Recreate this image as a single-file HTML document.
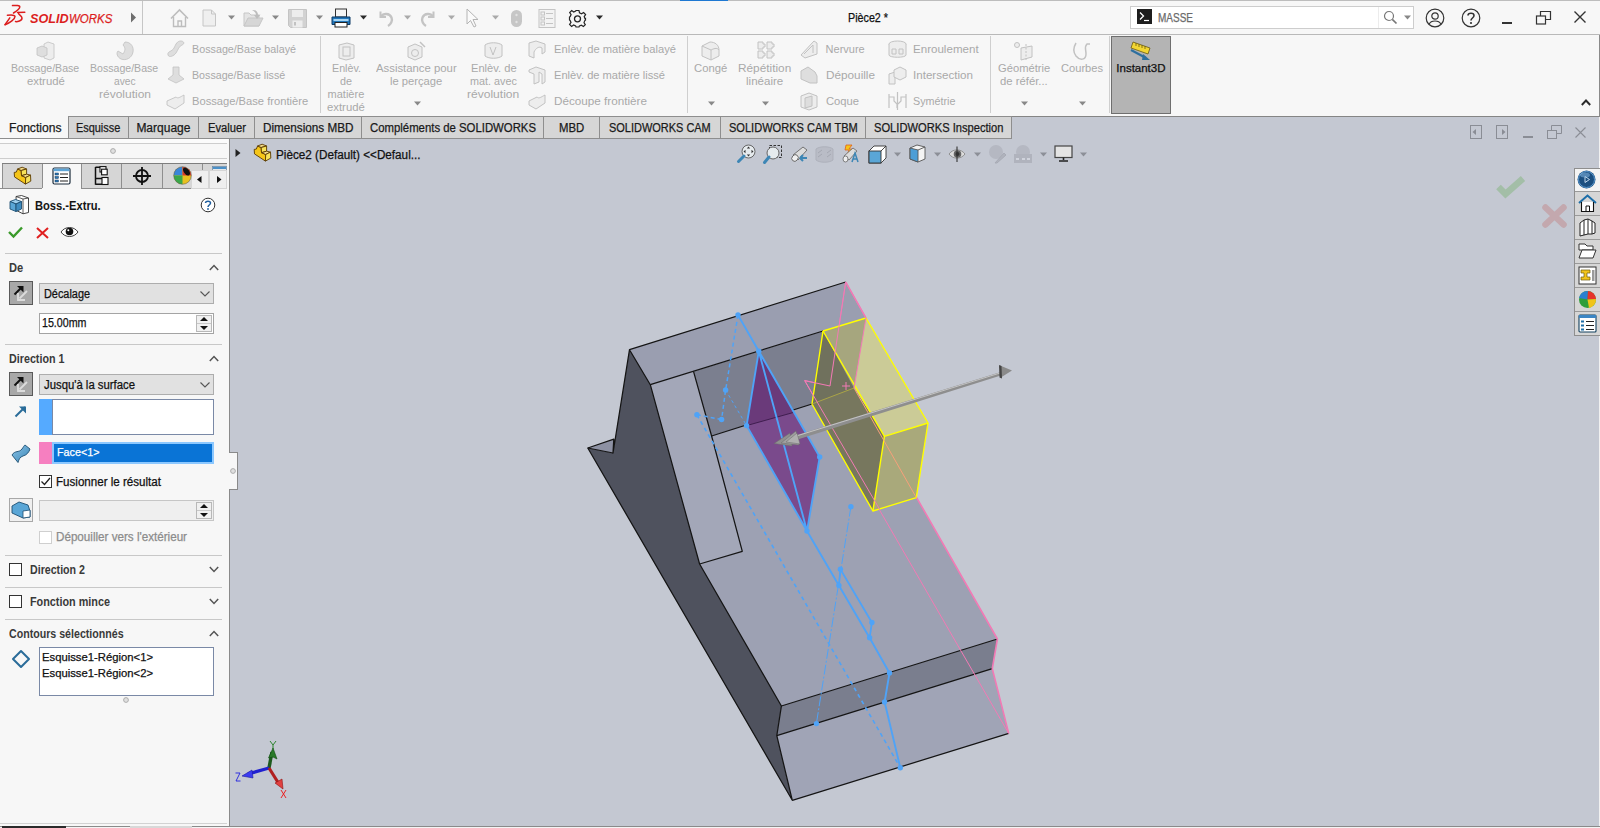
<!DOCTYPE html>
<html><head><meta charset="utf-8">
<style>
*{margin:0;padding:0;box-sizing:border-box}
html,body{width:1600px;height:828px;overflow:hidden;background:#f7f7f7;font-family:"Liberation Sans",sans-serif;font-size:12px;color:#000}
.a{position:absolute}
.t{position:absolute;white-space:nowrap;-webkit-text-stroke:0.25px currentColor}
svg{overflow:visible}
</style></head><body>

<div class="a" style="left:0px;top:0px;width:1600px;height:35px;background:#f7f7f7;"></div>
<div class="a" style="left:0px;top:0px;width:1600px;height:1px;background:#bdbdbd;"></div>
<div class="a" style="left:0px;top:34px;width:1600px;height:1px;background:#b9b9b9;"></div>
<div class="a" style="left:680px;top:0px;width:48px;height:1px;background:#1e78d2;"></div>
<svg class="a" style="left:4px;top:4px;" width="24" height="24" viewBox="0 0 24 24"><g fill="none" stroke="#dc1e1e" stroke-width="1.5" stroke-linecap="round"><path d="M8.5 1.6 C12 1.4 16 1.2 15.8 3 C15.6 5 12 7.5 9.5 9"/><path d="M3.4 11.3 C7 11 11 10.8 11 12.6 C11 15 6 19 1 20.7"/><path d="M5.8 13.8 L1.2 20.5"/><path d="M13.5 8.4 L20.8 8.2"/><path d="M14.6 8.6 C13.5 10.5 17.8 11.5 18 14 C18.2 17 13 17.8 11.5 17.6"/></g></svg>
<div class="t" style="left:30.00px;top:12.80px;font-size:12.5px;line-height:12.5px;color:#dc1e1e;font-weight:bold;-webkit-text-stroke:0;transform:scaleX(1.0106);transform-origin:0 0;font-style:italic;">SOLID</div>
<div class="t" style="left:68.60px;top:12.80px;font-size:12.5px;line-height:12.5px;color:#dc1e1e;transform:scaleX(0.9190);transform-origin:0 0;font-style:italic;">WORKS</div>
<svg class="a" style="left:130px;top:12px;" width="7" height="11" viewBox="0 0 7 11"><path d="M1 0.5 L6 5.5 L1 10.5Z" fill="#6e6e6e"/></svg>
<div class="a" style="left:142px;top:1px;width:1px;height:33px;background:#c6c6c6;"></div>
<svg class="a" style="left:170px;top:9px;" width="19" height="19" viewBox="0 0 19 19"><path d="M1 9.5 L9.5 1 L18 9.5" fill="none" stroke="#bdbdbd" stroke-width="1.6"/><path d="M3.5 8 V17.5 H15.5 V8 M8 17.5 V12 H11.5 V17.5" fill="none" stroke="#bdbdbd" stroke-width="1.4"/></svg>
<svg class="a" style="left:202px;top:9px;" width="15" height="18" viewBox="0 0 15 18"><path d="M1 1 H9.5 L13.5 5 V17 H1Z" fill="#efefef" stroke="#c6c6c6"/><path d="M9.5 1 V5 H13.5" fill="none" stroke="#c6c6c6"/></svg>
<svg class="a" style="left:243px;top:9px;" width="21" height="18" viewBox="0 0 21 18"><path d="M1 4 H6 L8 6 H16 V17 H1Z" fill="#e4e4e4" stroke="#c6c6c6"/><path d="M1 17 L5 9 H20 L16 17Z" fill="#d6d6d6" stroke="#c6c6c6"/><path d="M9 1 C13 0.5 15 3 15 6 L17.5 5.5 L14 10 L11 6 L13 6 C13 4 11.5 2 9 1Z" fill="#bdbdbd"/></svg>
<svg class="a" style="left:288px;top:9px;" width="19" height="19" viewBox="0 0 19 19"><path d="M0.5 0.5 H18.5 V18.5 H2.5 L0.5 16.5Z" fill="#d2d2d2" stroke="#c4c4c4"/><rect x="4" y="1" width="11" height="7" fill="#ededed"/><rect x="4.5" y="11.5" width="10" height="7" fill="#ededed"/><rect x="6" y="13" width="2" height="3.5" fill="#c2c2c2"/></svg>
<svg class="a" style="left:331px;top:8px;" width="20" height="20" viewBox="0 0 20 20"><rect x="4.5" y="1" width="11" height="8" fill="#f6f6f6" stroke="#333"/><path d="M1 9 H19 V16.5 H1Z" fill="#2277bb" stroke="#0d3b66"/><rect x="2.5" y="11" width="15" height="2" fill="#a8d6f4"/><rect x="4" y="14.5" width="12" height="4.5" fill="#fff" stroke="#222"/></svg>
<svg class="a" style="left:377px;top:9px;" width="17" height="18" viewBox="0 0 17 18"><path d="M3.5 2.5 V8 H9" fill="none" stroke="#c4c4c4" stroke-width="2"/><path d="M4 7.5 C6.5 4 12.5 4 14.5 8.5 C16 12 13.5 15.5 11 17" fill="none" stroke="#c4c4c4" stroke-width="2.4"/></svg>
<svg class="a" style="left:420px;top:9px;" width="17" height="18" viewBox="0 0 17 18"><path d="M13.5 2.5 V8 H8" fill="none" stroke="#c4c4c4" stroke-width="2"/><path d="M13 7.5 C10.5 4 4.5 4 2.5 8.5 C1 12 3.5 15.5 6 17" fill="none" stroke="#c4c4c4" stroke-width="2.4"/></svg>
<svg class="a" style="left:466px;top:8px;" width="14" height="20" viewBox="0 0 14 20"><path d="M1 1 V16 L4.5 12.5 L8 19 L10 18 L7 11.5 L12 11.5Z" fill="#fafafa" stroke="#b4b4b4"/></svg>
<svg class="a" style="left:511px;top:10px;" width="12" height="17" viewBox="0 0 12 17"><rect x="0" y="0" width="11" height="17" rx="5.5" fill="#c6c6c6"/><circle cx="5.5" cy="5" r="1.2" fill="#e2e2e2"/><circle cx="5.5" cy="12" r="1.2" fill="#e2e2e2"/></svg>
<svg class="a" style="left:538px;top:9px;" width="18" height="19" viewBox="0 0 18 19"><rect x="1" y="0.5" width="16" height="18" fill="#f3f3f3" stroke="#c4c4c4"/><rect x="3" y="3" width="3.5" height="3" fill="none" stroke="#c4c4c4"/><rect x="3" y="8" width="3.5" height="3" fill="none" stroke="#c4c4c4"/><rect x="3" y="13" width="3.5" height="3" fill="none" stroke="#c4c4c4"/><path d="M8 4.5 H15 M8 9.5 H15 M8 14.5 H15" stroke="#c4c4c4"/></svg>
<svg class="a" style="left:568px;top:9px;" width="19" height="19" viewBox="0 0 19 19"><path d="M8 1.5 H11 L11.5 3.8 L13.5 4.8 L15.6 3.5 L17.6 5.6 L16.2 7.6 L17 9.7 L17.5 9.5 V11.2 L16.8 11.6 L16 13.6 L17.3 15.6 L15.4 17.5 L13.4 16.2 L11.4 17 L11 18 H8 L7.6 16.9 L5.6 16 L3.6 17.4 L1.6 15.4 L3 13.4 L2.1 11.4 L1.5 11 V8 L2.2 7.6 L3.1 5.6 L1.7 3.6 L3.7 1.6 L5.7 3 L7.7 2.1Z" fill="none" stroke="#262626" stroke-width="1.2"/><circle cx="9.5" cy="9.8" r="3" fill="none" stroke="#262626" stroke-width="1.3"/></svg>
<svg class="a" style="left:227.5px;top:15px;" width="7" height="5" viewBox="0 0 7 5"><path d="M0 0.5 H7 L3.5 4.5Z" fill="#888"/></svg>
<svg class="a" style="left:271.5px;top:15px;" width="7" height="5" viewBox="0 0 7 5"><path d="M0 0.5 H7 L3.5 4.5Z" fill="#888"/></svg>
<svg class="a" style="left:315.5px;top:15px;" width="7" height="5" viewBox="0 0 7 5"><path d="M0 0.5 H7 L3.5 4.5Z" fill="#888"/></svg>
<svg class="a" style="left:359.5px;top:15px;" width="7" height="5" viewBox="0 0 7 5"><path d="M0 0.5 H7 L3.5 4.5Z" fill="#2a2a2a"/></svg>
<svg class="a" style="left:403.5px;top:15px;" width="7" height="5" viewBox="0 0 7 5"><path d="M0 0.5 H7 L3.5 4.5Z" fill="#aaa"/></svg>
<svg class="a" style="left:447.5px;top:15px;" width="7" height="5" viewBox="0 0 7 5"><path d="M0 0.5 H7 L3.5 4.5Z" fill="#aaa"/></svg>
<svg class="a" style="left:491.5px;top:15px;" width="7" height="5" viewBox="0 0 7 5"><path d="M0 0.5 H7 L3.5 4.5Z" fill="#aaa"/></svg>
<svg class="a" style="left:595.5px;top:15px;" width="7" height="5" viewBox="0 0 7 5"><path d="M0 0.5 H7 L3.5 4.5Z" fill="#2a2a2a"/></svg>
<div class="t" style="left:848.00px;top:12.00px;font-size:12px;line-height:12px;color:#111;transform:scaleX(0.8949);transform-origin:0 0;">Pièce2 *</div>
<div class="a" style="left:1130px;top:6px;width:284px;height:23px;background:#fff;border:1px solid #cdcdcd;"></div>
<div class="a" style="left:1378px;top:7px;width:1px;height:21px;background:#ececec;"></div>
<div class="a" style="left:1137px;top:9px;width:15px;height:15px;background:#1e1e1e;"></div>
<svg class="a" style="left:1137px;top:9px;" width="15" height="15" viewBox="0 0 15 15"><path d="M3 3.5 L6.5 7 L3 10.5" fill="none" stroke="#fff" stroke-width="1.3"/><path d="M7 11.5 H12" stroke="#fff" stroke-width="1.2"/></svg>
<div class="t" style="left:1158.00px;top:12.00px;font-size:12px;line-height:12px;color:#6a6a6a;transform:scaleX(0.8331);transform-origin:0 0;">MASSE</div>
<svg class="a" style="left:1383px;top:10px;" width="15" height="15" viewBox="0 0 15 15"><circle cx="6" cy="6" r="4.5" fill="none" stroke="#777" stroke-width="1.2"/><path d="M9.3 9.3 L13.5 13.5" stroke="#777" stroke-width="1.7"/></svg>
<svg class="a" style="left:1404px;top:15px;" width="7" height="5" viewBox="0 0 7 5"><path d="M0 0.5 H7 L3.5 4.5Z" fill="#888"/></svg>
<svg class="a" style="left:1425px;top:8px;" width="20" height="20" viewBox="0 0 20 20"><circle cx="10" cy="10" r="8.8" fill="none" stroke="#333" stroke-width="1.2"/><circle cx="10" cy="8" r="3.2" fill="none" stroke="#333" stroke-width="1.2"/><path d="M4.2 16 C6 12 14 12 15.8 16" fill="none" stroke="#333" stroke-width="1.2"/></svg>
<svg class="a" style="left:1461px;top:8px;" width="20" height="20" viewBox="0 0 20 20"><circle cx="10" cy="10" r="8.8" fill="none" stroke="#333" stroke-width="1.2"/><path d="M7 7.5 C7 4.5 13 4.5 13 7.5 C13 10 10 10 10 12.5" fill="none" stroke="#333" stroke-width="1.6"/><circle cx="10" cy="15" r="1.1" fill="#333"/></svg>
<div class="a" style="left:1502px;top:22px;width:10px;height:2px;background:#333;"></div>
<svg class="a" style="left:1536px;top:10px;" width="16" height="16" viewBox="0 0 16 16"><rect x="0.5" y="6" width="9" height="8" fill="none" stroke="#333" stroke-width="1.2"/><path d="M4.5 6 V1.5 H14.5 V9.5 H9.5" fill="none" stroke="#333" stroke-width="1.2"/></svg>
<svg class="a" style="left:1574px;top:11px;" width="12" height="12" viewBox="0 0 12 12"><path d="M0.5 0.5 L11.5 11.5 M11.5 0.5 L0.5 11.5" stroke="#333" stroke-width="1.4"/></svg>
<div class="a" style="left:0px;top:35px;width:1600px;height:81px;background:#f7f7f7;"></div>
<div class="a" style="left:320px;top:36px;width:1px;height:77px;background:#cfcfcf;"></div>
<div class="a" style="left:687px;top:36px;width:1px;height:77px;background:#cfcfcf;"></div>
<div class="a" style="left:990px;top:36px;width:1px;height:77px;background:#cfcfcf;"></div>
<div class="a" style="left:1109px;top:36px;width:1px;height:77px;background:#cfcfcf;"></div>
<div class="t" style="left:11.40px;top:63.00px;font-size:11px;line-height:11px;color:#a9a9a9;-webkit-text-stroke:0;transform:scaleX(0.9614);transform-origin:0 0;">Bossage/Base</div>
<div class="t" style="left:26.60px;top:76.00px;font-size:11px;line-height:11px;color:#a9a9a9;-webkit-text-stroke:0;transform:scaleX(1.0302);transform-origin:0 0;">extrudé</div>
<div class="t" style="left:90.40px;top:63.00px;font-size:11px;line-height:11px;color:#a9a9a9;-webkit-text-stroke:0;transform:scaleX(0.9614);transform-origin:0 0;">Bossage/Base</div>
<div class="t" style="left:113.70px;top:76.00px;font-size:11px;line-height:11px;color:#a9a9a9;-webkit-text-stroke:0;transform:scaleX(0.9296);transform-origin:0 0;">avec</div>
<div class="t" style="left:98.50px;top:89.00px;font-size:11px;line-height:11px;color:#a9a9a9;-webkit-text-stroke:0;transform:scaleX(1.0902);transform-origin:0 0;">révolution</div>
<div class="t" style="left:192.40px;top:44.00px;font-size:11px;line-height:11px;color:#a9a9a9;-webkit-text-stroke:0;transform:scaleX(0.9774);transform-origin:0 0;">Bossage/Base balayé</div>
<div class="t" style="left:192.40px;top:70.00px;font-size:11px;line-height:11px;color:#a9a9a9;-webkit-text-stroke:0;transform:scaleX(0.9709);transform-origin:0 0;">Bossage/Base lissé</div>
<div class="t" style="left:192.40px;top:96.00px;font-size:11px;line-height:11px;color:#a9a9a9;-webkit-text-stroke:0;transform:scaleX(1.0162);transform-origin:0 0;">Bossage/Base frontière</div>
<div class="t" style="left:331.50px;top:63.00px;font-size:11px;line-height:11px;color:#a9a9a9;-webkit-text-stroke:0;transform:scaleX(0.9746);transform-origin:0 0;">Enlèv.</div>
<div class="t" style="left:340.00px;top:76.00px;font-size:11px;line-height:11px;color:#a9a9a9;-webkit-text-stroke:0;transform:scaleX(0.9808);transform-origin:0 0;">de</div>
<div class="t" style="left:327.60px;top:89.00px;font-size:11px;line-height:11px;color:#a9a9a9;-webkit-text-stroke:0;">matière</div>
<div class="t" style="left:327.10px;top:102.00px;font-size:11px;line-height:11px;color:#a9a9a9;-webkit-text-stroke:0;transform:scaleX(1.0302);transform-origin:0 0;">extrudé</div>
<div class="t" style="left:376.15px;top:63.00px;font-size:11px;line-height:11px;color:#a9a9a9;-webkit-text-stroke:0;transform:scaleX(1.0311);transform-origin:0 0;">Assistance pour</div>
<div class="t" style="left:390.35px;top:76.00px;font-size:11px;line-height:11px;color:#a9a9a9;-webkit-text-stroke:0;transform:scaleX(1.0181);transform-origin:0 0;">le perçage</div>
<svg class="a" style="left:413.5px;top:101px;" width="7" height="5" viewBox="0 0 7 5"><path d="M0 0.5 H7 L3.5 4.5Z" fill="#888"/></svg>
<div class="t" style="left:470.70px;top:63.00px;font-size:11px;line-height:11px;color:#a9a9a9;-webkit-text-stroke:0;transform:scaleX(1.0123);transform-origin:0 0;">Enlèv. de</div>
<div class="t" style="left:470.10px;top:76.00px;font-size:11px;line-height:11px;color:#a9a9a9;-webkit-text-stroke:0;transform:scaleX(0.9814);transform-origin:0 0;">mat. avec</div>
<div class="t" style="left:467.40px;top:89.00px;font-size:11px;line-height:11px;color:#a9a9a9;-webkit-text-stroke:0;transform:scaleX(1.0944);transform-origin:0 0;">révolution</div>
<div class="t" style="left:553.50px;top:44.00px;font-size:11px;line-height:11px;color:#a9a9a9;-webkit-text-stroke:0;transform:scaleX(1.0145);transform-origin:0 0;">Enlèv. de matière balayé</div>
<div class="t" style="left:553.50px;top:70.00px;font-size:11px;line-height:11px;color:#a9a9a9;-webkit-text-stroke:0;transform:scaleX(1.0105);transform-origin:0 0;">Enlèv. de matière lissé</div>
<div class="t" style="left:553.50px;top:96.00px;font-size:11px;line-height:11px;color:#a9a9a9;-webkit-text-stroke:0;transform:scaleX(1.0636);transform-origin:0 0;">Découpe frontière</div>
<div class="t" style="left:694.40px;top:63.00px;font-size:11px;line-height:11px;color:#a9a9a9;-webkit-text-stroke:0;transform:scaleX(1.0242);transform-origin:0 0;">Congé</div>
<svg class="a" style="left:707.5px;top:101px;" width="7" height="5" viewBox="0 0 7 5"><path d="M0 0.5 H7 L3.5 4.5Z" fill="#888"/></svg>
<div class="t" style="left:738.40px;top:63.00px;font-size:11px;line-height:11px;color:#a9a9a9;-webkit-text-stroke:0;transform:scaleX(1.0740);transform-origin:0 0;">Répétition</div>
<div class="t" style="left:746.40px;top:76.00px;font-size:11px;line-height:11px;color:#a9a9a9;-webkit-text-stroke:0;transform:scaleX(1.0489);transform-origin:0 0;">linéaire</div>
<svg class="a" style="left:761.5px;top:101px;" width="7" height="5" viewBox="0 0 7 5"><path d="M0 0.5 H7 L3.5 4.5Z" fill="#888"/></svg>
<div class="t" style="left:825.60px;top:44.00px;font-size:11px;line-height:11px;color:#a9a9a9;-webkit-text-stroke:0;">Nervure</div>
<div class="t" style="left:825.60px;top:70.00px;font-size:11px;line-height:11px;color:#a9a9a9;-webkit-text-stroke:0;transform:scaleX(1.0684);transform-origin:0 0;">Dépouille</div>
<div class="t" style="left:825.60px;top:96.00px;font-size:11px;line-height:11px;color:#a9a9a9;-webkit-text-stroke:0;transform:scaleX(1.0181);transform-origin:0 0;">Coque</div>
<div class="t" style="left:913.40px;top:44.00px;font-size:11px;line-height:11px;color:#a9a9a9;-webkit-text-stroke:0;transform:scaleX(1.0518);transform-origin:0 0;">Enroulement</div>
<div class="t" style="left:913.40px;top:70.00px;font-size:11px;line-height:11px;color:#a9a9a9;-webkit-text-stroke:0;transform:scaleX(1.0551);transform-origin:0 0;">Intersection</div>
<div class="t" style="left:913.40px;top:96.00px;font-size:11px;line-height:11px;color:#a9a9a9;-webkit-text-stroke:0;transform:scaleX(0.9793);transform-origin:0 0;">Symétrie</div>
<div class="t" style="left:997.50px;top:63.00px;font-size:11px;line-height:11px;color:#a9a9a9;-webkit-text-stroke:0;transform:scaleX(1.0165);transform-origin:0 0;">Géométrie</div>
<div class="t" style="left:999.73px;top:76.00px;font-size:11px;line-height:11px;color:#a9a9a9;-webkit-text-stroke:0;transform:scaleX(1.0275);transform-origin:0 0;">de référ...</div>
<svg class="a" style="left:1020.5px;top:101px;" width="7" height="5" viewBox="0 0 7 5"><path d="M0 0.5 H7 L3.5 4.5Z" fill="#888"/></svg>
<div class="t" style="left:1060.50px;top:63.00px;font-size:11px;line-height:11px;color:#a9a9a9;-webkit-text-stroke:0;transform:scaleX(1.0102);transform-origin:0 0;">Courbes</div>
<svg class="a" style="left:1078.5px;top:101px;" width="7" height="5" viewBox="0 0 7 5"><path d="M0 0.5 H7 L3.5 4.5Z" fill="#888"/></svg>
<div class="a" style="left:1111px;top:36px;width:60px;height:78px;background:#b4b4b4;border:1px solid #6f6f6f;"></div>
<div class="t" style="left:1116.30px;top:63.00px;font-size:11.5px;line-height:11.5px;color:#111;">Instant3D</div>
<svg class="a" style="left:1581px;top:99px;" width="10" height="7" viewBox="0 0 10 7"><path d="M0.8 6 L5 1.5 L9.2 6" fill="none" stroke="#2a2a2a" stroke-width="1.9"/></svg>
<svg class="a" style="left:36px;top:41px;" width="19" height="19" viewBox="0 0 19 19"><path d="M8 3 L12 1 L18 3 V17 L14 19 L8 17Z" fill="#ededed" stroke="#c2c2c2" stroke-width="0.8"/><path d="M1 7 L6 5 L11 7 V14 L6 16 L1 14Z" fill="#dedede" stroke="#c2c2c2" stroke-width="0.8"/></svg>
<svg class="a" style="left:115px;top:41px;" width="19" height="20" viewBox="0 0 19 20"><path d="M10 1 C16 1 19 6 18 11 C17 17 11 20 6 18 C2 16 1 12 3 10 L8 13 C10 10 11 7 8 4Z" fill="#dedede" stroke="#c2c2c2" stroke-width="0.8"/></svg>
<svg class="a" style="left:166px;top:40px;" width="19" height="18" viewBox="0 0 19 18"><path d="M2 15 C1 11 6 12 8 8 C10 4 11 1 15 1 C18 1 19 4 16 5 C13 6 12 10 10 13 C8 16 3 18 2 15Z" fill="#dedede" stroke="#c2c2c2" stroke-width="0.8"/></svg>
<svg class="a" style="left:167px;top:66px;" width="18" height="18" viewBox="0 0 18 18"><path d="M6 1 H12 V9 L17 13 L9 17 L1 13 L6 9Z" fill="#dedede" stroke="#c2c2c2" stroke-width="0.8"/></svg>
<svg class="a" style="left:166px;top:93px;" width="19" height="17" viewBox="0 0 19 17"><path d="M1 8 L10 4 C12 6 14 4 18 2 V10 L9 16 L1 12Z" fill="#ededed" stroke="#c2c2c2" stroke-width="0.9"/></svg>
<svg class="a" style="left:338px;top:42px;" width="17" height="18" viewBox="0 0 17 18"><path d="M1 3 L9 1 L16 3 V16 L8 18 L1 16Z" fill="#ededed" stroke="#c2c2c2"/><rect x="5" y="5" width="7" height="9" fill="none" stroke="#c2c2c2"/></svg>
<svg class="a" style="left:407px;top:41px;" width="19" height="19" viewBox="0 0 19 19"><path d="M1 6 L8 3 L15 6 V16 L8 19 L1 16Z" fill="#ededed" stroke="#c2c2c2"/><circle cx="8" cy="12" r="3.5" fill="none" stroke="#c2c2c2"/><path d="M13 1 L18 6" stroke="#c2c2c2" stroke-width="1.5"/></svg>
<svg class="a" style="left:484px;top:41px;" width="19" height="19" viewBox="0 0 19 19"><path d="M1 4 C5 1 14 1 18 4 V15 C14 18 5 18 1 15Z" fill="#ededed" stroke="#c2c2c2"/><path d="M6 6 L9 14 L12 6" fill="none" stroke="#c2c2c2"/></svg>
<svg class="a" style="left:528px;top:40px;" width="18" height="19" viewBox="0 0 18 19"><path d="M1 3 L8 1 L17 4 V12 L14 14 V8 C11 6 8 8 6 12 V18 L1 16Z" fill="#ededed" stroke="#c2c2c2"/></svg>
<svg class="a" style="left:528px;top:66px;" width="18" height="19" viewBox="0 0 18 19"><path d="M1 4 L8 1 L17 4 V16 L14 18 V8 L11 6 V16 L6 18 V8 L1 6Z" fill="#ededed" stroke="#c2c2c2"/></svg>
<svg class="a" style="left:528px;top:92px;" width="18" height="18" viewBox="0 0 18 18"><path d="M1 9 L9 5 C11 7 13 5 17 3 V11 L8 17 L1 13Z" fill="#ededed" stroke="#c2c2c2"/></svg>
<svg class="a" style="left:701px;top:41px;" width="19" height="19" viewBox="0 0 19 19"><path d="M1 5 L9 1 C14 1 18 4 18 9 V15 L10 19 L1 15Z" fill="#ededed" stroke="#c2c2c2"/><path d="M1 5 L10 9 V19 M10 9 C12 8 16 6 18 9" fill="none" stroke="#c2c2c2"/></svg>
<svg class="a" style="left:757px;top:41px;" width="17" height="18" viewBox="0 0 17 18"><path d="M1 1 H6 V3 H8 V6 H6 V8 H1Z M10 1 H15 V3 H17 V6 H15 V8 H10Z M1 10 H6 V12 H8 V15 H6 V17 H1Z M10 10 H15 V12 H17 V15 H15 V17 H10Z" fill="#ededed" stroke="#c2c2c2"/></svg>
<svg class="a" style="left:800px;top:40px;" width="18" height="19" viewBox="0 0 18 19"><path d="M1 15 L14 1 L17 3 V14 L5 18Z" fill="#ededed" stroke="#c2c2c2"/><path d="M4 14 L13 5 V13" fill="none" stroke="#c2c2c2"/></svg>
<svg class="a" style="left:800px;top:66px;" width="18" height="18" viewBox="0 0 18 18"><path d="M1 5 L8 1 L15 6 L17 10 V17 L10 17 L1 13Z" fill="#dedede" stroke="#c2c2c2"/></svg>
<svg class="a" style="left:800px;top:92px;" width="18" height="18" viewBox="0 0 18 18"><path d="M1 4 L9 1 L17 4 V15 L9 18 L1 15Z" fill="#ededed" stroke="#c2c2c2"/><path d="M5 6 L12 4 V14 L5 16Z" fill="#dedede" stroke="#c2c2c2"/></svg>
<svg class="a" style="left:888px;top:40px;" width="19" height="19" viewBox="0 0 19 19"><ellipse cx="9.5" cy="4" rx="8.5" ry="3" fill="#ededed" stroke="#c2c2c2"/><path d="M1 4 V15 C1 18 18 18 18 15 V4" fill="#ededed" stroke="#c2c2c2"/><path d="M4 9 H8 V14 H4Z M11 9 H15 V14 H11Z" fill="none" stroke="#c2c2c2"/></svg>
<svg class="a" style="left:888px;top:66px;" width="19" height="19" viewBox="0 0 19 19"><path d="M1 8 L7 6 V18 L1 18Z" fill="#ededed" stroke="#c2c2c2"/><path d="M6 4 L12 1 L18 4 V11 L12 14 L6 11Z" fill="#ededed" stroke="#c2c2c2"/></svg>
<svg class="a" style="left:888px;top:92px;" width="19" height="18" viewBox="0 0 19 18"><path d="M1 2 V16 M1 5 H6 V9 L9 12 V16 M9.5 0 V18 M18 2 V16 M18 5 H13 V9 L10 12" fill="none" stroke="#c2c2c2" stroke-width="1.2"/></svg>
<svg class="a" style="left:1014px;top:42px;" width="19" height="19" viewBox="0 0 19 19"><circle cx="3" cy="3" r="2.5" fill="#ededed" stroke="#c2c2c2"/><path d="M7 6 L18 4 V15 L7 18Z" fill="#ededed" stroke="#c2c2c2"/><path d="M12 2 V19" stroke="#c2c2c2" stroke-dasharray="2 1.5"/></svg>
<svg class="a" style="left:1072px;top:42px;" width="19" height="19" viewBox="0 0 19 19"><path d="M4 1 C1 6 1 10 4 14 C8 19 14 18 14 12 C14 7 12 5 15 2 L18 2" fill="none" stroke="#c2c2c2" stroke-width="1.5"/></svg>
<svg class="a" style="left:1130px;top:41px;" width="21" height="20" viewBox="0 0 21 20"><path d="M3 1 L20 7 L18 13 L1 7Z" fill="#f2d633" stroke="#6b5a10" stroke-width="0.8"/><path d="M6 2 V5 M9 3 V6 M12 4 V7 M15 5 V8" stroke="#6b5a10" stroke-width="0.8"/><path d="M1 9 L16 17" stroke="#2e6f9e" stroke-width="2"/><path d="M13 13 L20 19 L12 19Z" fill="#2e6f9e"/></svg>
<div class="a" style="left:230px;top:117px;width:1369px;height:709px;background:#c4c8d2;"></div>
<div class="a" style="left:1599px;top:117px;width:1px;height:44px;background:#f0f0f0;"></div>
<div class="a" style="left:1599px;top:336px;width:1px;height:490px;background:#f0f0f0;"></div>
<div class="a" style="left:0px;top:116px;width:1600px;height:1px;background:#858585;"></div>
<div class="a" style="left:1599px;top:35px;width:1px;height:82px;background:#8a8a8a;"></div>
<svg class="a" style="left:235px;top:149px;" width="6" height="8" viewBox="0 0 6 8"><path d="M0.5 0 L5.5 4 L0.5 8Z" fill="#222"/></svg>
<svg class="a" style="left:250px;top:140px;" width="24" height="24" viewBox="0 0 24 24"><g stroke="#5a3a00" stroke-width="0.9" stroke-linejoin="round"><polygon points="4.2,9.4 6.3,9.1 7.6,6 11.2,7.5 11.5,12.7 15.7,14.5 15.4,21.1 4.5,13.9" fill="#f5c518"/><polygon points="7.6,6 12.1,4.2 16.6,6 11.2,7.5" fill="#f3dc8a"/><polygon points="11.2,7.5 16.6,6 16.6,11.2 11.5,12.7" fill="#f7e25a"/><polygon points="11.5,12.7 16.6,11.2 20.5,12.1 15.7,14.5" fill="#f3dc8a"/><polygon points="15.7,14.5 20.5,12.1 20.8,18.1 15.4,21.1" fill="#f7e25a"/></g></svg>
<div class="t" style="left:275.50px;top:149.00px;font-size:12px;line-height:12px;color:#111;transform:scaleX(0.9758);transform-origin:0 0;">Pièce2 (Default) &lt;&lt;Defaul...</div>
<svg class="a" style="left:737px;top:144px;" width="20" height="19" viewBox="0 0 20 19"><circle cx="11.5" cy="7.5" r="6.5" fill="#e6ebee" stroke="#666" stroke-width="1"/><path d="M11.5 2.5 L9.8 4.5 H13.2Z M11.5 12.5 L9.8 10.5 H13.2Z M6.5 7.5 L8.5 5.8 V9.2Z M16.5 7.5 L14.5 5.8 V9.2Z" fill="#333"/><path d="M7 12 L1.5 17.5" stroke="#3d86b5" stroke-width="3" stroke-linecap="round"/></svg>
<svg class="a" style="left:763px;top:145px;" width="20" height="19" viewBox="0 0 20 19"><rect x="6.5" y="0.5" width="12" height="12" fill="none" stroke="#333" stroke-width="1" stroke-dasharray="2.5 1.5"/><circle cx="10" cy="8" r="6" fill="#e6ebee" stroke="#666" stroke-width="1"/><path d="M6 12 L1.5 17.5" stroke="#3d86b5" stroke-width="3" stroke-linecap="round"/></svg>
<svg class="a" style="left:790px;top:145px;" width="19" height="18" viewBox="0 0 19 18"><path d="M3 10 L13 2 L17 5 L8 15 Z" fill="#dcdcdc" stroke="#666" stroke-width="0.9"/><ellipse cx="5" cy="13" rx="3" ry="3.5" transform="rotate(40 5 13)" fill="#f0f0f0" stroke="#666" stroke-width="0.9"/><path d="M10 13 H17 M10 13 L13 10 M10 13 L13 16" stroke="#3d86b5" stroke-width="2"/></svg>
<svg class="a" style="left:815px;top:145px;" width="19" height="18" viewBox="0 0 19 18"><path d="M1 4 C5 1 14 1 18 4 V15 C14 18 5 18 1 15Z" fill="#b9bcc6" stroke="#aeb1bb"/><path d="M3 8 L7 5 M3 12 L7 9 M12 8 L16 5 M12 12 L16 9" stroke="#a5a8b2"/></svg>
<svg class="a" style="left:841px;top:144px;" width="19" height="19" viewBox="0 0 19 19"><path d="M5 1 L11 1 L8 5 H12 L6 11 L8 6 H4Z" fill="#f5c518" stroke="#e0601c" stroke-width="0.8"/><path d="M3 12 L12 4 L16 7 L8 16Z" fill="#dcdcdc" stroke="#666" stroke-width="0.8"/><ellipse cx="4.5" cy="15" rx="2.5" ry="3" fill="#eee" stroke="#666" stroke-width="0.8"/><path d="M11 18 L14 9 L17 18 M12 15 H16" fill="none" stroke="#3d86b5" stroke-width="1.5"/></svg>
<svg class="a" style="left:868px;top:145px;" width="19" height="19" viewBox="0 0 19 19"><path d="M1 6 L6 1 H18 V13 L13 18 H1Z" fill="#fff" stroke="#333" stroke-width="0.9"/><rect x="1" y="6" width="12" height="12" fill="#5aa6d6" stroke="#333" stroke-width="0.9"/><path d="M13 6 L18 1" stroke="#333" stroke-width="0.9"/></svg>
<svg class="a" style="left:893.5px;top:152px;" width="7" height="5" viewBox="0 0 7 5"><path d="M0 0.5 H7 L3.5 4.5Z" fill="#8c8f97"/></svg>
<svg class="a" style="left:909px;top:144px;" width="17" height="19" viewBox="0 0 17 19"><path d="M1 4 L8 1 L16 3 V15 L9 18 L1 15Z" fill="#f4f4f4" stroke="#555" stroke-width="0.9"/><path d="M1 4 L9 6 V18 L1 15Z" fill="#4d9ed6" stroke="#555" stroke-width="0.9"/><path d="M9 6 L16 3" stroke="#555" stroke-width="0.9"/></svg>
<svg class="a" style="left:933.5px;top:152px;" width="7" height="5" viewBox="0 0 7 5"><path d="M0 0.5 H7 L3.5 4.5Z" fill="#8c8f97"/></svg>
<svg class="a" style="left:948px;top:145px;" width="18" height="18" viewBox="0 0 18 18"><path d="M1 9 C5 3.5 13 3.5 17 9 C13 14.5 5 14.5 1 9Z" fill="#dcdcdc" stroke="#888" stroke-width="0.9"/><circle cx="9.5" cy="9" r="3.8" fill="#666"/><circle cx="9.5" cy="9" r="2" fill="#333"/><path d="M9 1.5 V17" stroke="#333" stroke-width="1.1"/></svg>
<svg class="a" style="left:973.5px;top:152px;" width="7" height="5" viewBox="0 0 7 5"><path d="M0 0.5 H7 L3.5 4.5Z" fill="#8c8f97"/></svg>
<svg class="a" style="left:987px;top:144px;" width="20" height="20" viewBox="0 0 20 20"><circle cx="9" cy="8" r="7" fill="#b5b8c2"/><path d="M8 19 L17 9 L19 11 L10 19Z" fill="#b0b3bd" stroke="#a8abb5"/></svg>
<svg class="a" style="left:1013px;top:144px;" width="20" height="20" viewBox="0 0 20 20"><circle cx="10" cy="8" r="7" fill="#b5b8c2"/><path d="M1 10 H19 V19 H1Z" fill="#b0b3bd"/><path d="M3 15 H6 M9 15 H12 M14 15 H17" stroke="#d0d3dc" stroke-width="2"/></svg>
<svg class="a" style="left:1039.5px;top:152px;" width="7" height="5" viewBox="0 0 7 5"><path d="M0 0.5 H7 L3.5 4.5Z" fill="#8c8f97"/></svg>
<svg class="a" style="left:1054px;top:145px;" width="19" height="18" viewBox="0 0 19 18"><rect x="1" y="1" width="17" height="11.5" fill="#e4e4e4" stroke="#444" stroke-width="1.2"/><path d="M9.5 12.5 V15 M5 16 H14" stroke="#222" stroke-width="1.6"/></svg>
<svg class="a" style="left:1079.5px;top:152px;" width="7" height="5" viewBox="0 0 7 5"><path d="M0 0.5 H7 L3.5 4.5Z" fill="#8c8f97"/></svg>
<svg class="a" style="left:1470px;top:125px;" width="12" height="14" viewBox="0 0 12 14"><rect x="0.5" y="0.5" width="11" height="13" fill="none" stroke="#8a8d95"/><path d="M6 4 V10 L2.5 7Z" fill="#8a8d95"/></svg>
<svg class="a" style="left:1496px;top:125px;" width="12" height="14" viewBox="0 0 12 14"><rect x="0.5" y="0.5" width="11" height="13" fill="none" stroke="#8a8d95"/><path d="M6 4 V10 L9.5 7Z" fill="#8a8d95"/></svg>
<div class="a" style="left:1523px;top:136px;width:10px;height:2px;background:#8a8d95;"></div>
<svg class="a" style="left:1547px;top:125px;" width="15" height="14" viewBox="0 0 15 14"><rect x="0.5" y="5.5" width="9" height="8" fill="none" stroke="#8a8d95"/><path d="M4.5 5.5 V0.5 H14.5 V8.5 H9.5" fill="none" stroke="#8a8d95"/></svg>
<svg class="a" style="left:1575px;top:127px;" width="11" height="11" viewBox="0 0 11 11"><path d="M0.5 0.5 L10.5 10.5 M10.5 0.5 L0.5 10.5" stroke="#8a8d95" stroke-width="1.1"/></svg>
<svg class="a" style="left:1496px;top:175px;" width="30" height="23" viewBox="0 0 30 23"><path d="M2.5 12 L9.5 19 L27 3.5" fill="none" stroke="#a3bea7" stroke-width="6.5"/></svg>
<svg class="a" style="left:1542px;top:204px;" width="25" height="24" viewBox="0 0 25 24"><path d="M3.5 3.5 L21.5 20.5 M21.5 3.5 L3.5 20.5" stroke="#c3a8ae" stroke-width="6.5" stroke-linecap="round"/></svg>
<div class="a" style="left:1574px;top:168px;width:26px;height:168px;background:#d6d6d6;border:1px solid #8e8e8e;border-right:none;"></div>
<div class="a" style="left:1575px;top:169px;width:25px;height:22px;background:#f4f4f4;"></div>
<div class="a" style="left:1575px;top:191px;width:25px;height:1px;background:#9a9a9a;"></div>
<div class="a" style="left:1575px;top:215px;width:25px;height:1px;background:#9a9a9a;"></div>
<div class="a" style="left:1575px;top:239px;width:25px;height:1px;background:#9a9a9a;"></div>
<div class="a" style="left:1575px;top:263px;width:25px;height:1px;background:#9a9a9a;"></div>
<div class="a" style="left:1575px;top:287px;width:25px;height:1px;background:#9a9a9a;"></div>
<div class="a" style="left:1575px;top:311px;width:25px;height:1px;background:#9a9a9a;"></div>
<svg class="a" style="left:1577px;top:170px;" width="19" height="19" viewBox="0 0 19 19"><circle cx="9.5" cy="9.5" r="9" fill="#1c4f80"/><circle cx="9.5" cy="9.5" r="8" fill="none" stroke="#5c9ad0" stroke-width="1"/><path d="M8 6.5 L12.5 9.5 L8 12.5Z" fill="none" stroke="#cfe3f5" stroke-width="0.9"/><ellipse cx="8" cy="5" rx="5" ry="2.5" fill="#8ec0ea" opacity="0.5"/></svg>
<svg class="a" style="left:1578px;top:194px;" width="19" height="19" viewBox="0 0 19 19"><path d="M1 9 L9.5 1.5 L18 9" fill="none" stroke="#1e6fa8" stroke-width="2"/><path d="M3.5 8 V17.5 H15.5 V8" fill="#fff" stroke="#111" stroke-width="1.1"/><path d="M8 17.5 V12 H11.5 V17.5" fill="none" stroke="#111"/></svg>
<svg class="a" style="left:1579px;top:218px;" width="17" height="19" viewBox="0 0 17 19"><path d="M1 5 L5 2 V17 L1 18Z M5 2 L9 1 V16 L5 17 M9 1 L13 3 V16 L9 16 M13 3 L16 5 V15 L13 16" fill="#fff" stroke="#222" stroke-width="1"/></svg>
<svg class="a" style="left:1578px;top:243px;" width="19" height="16" viewBox="0 0 19 16"><path d="M1 1 H7 L9 3 H15 V7 H1Z" fill="#fff" stroke="#333"/><path d="M1 15 L4 7 H18 L15 15Z" fill="#fff" stroke="#333"/></svg>
<svg class="a" style="left:1578px;top:266px;" width="19" height="19" viewBox="0 0 19 19"><rect x="1" y="1" width="17" height="17" fill="#fff" stroke="#333"/><path d="M3 4 H12 V7 H9 V11 H12 V14 H3 V11 H6 V7 H3Z" fill="#f2c41b" stroke="#6b5a10" stroke-width="0.7"/><rect x="14" y="4" width="2.5" height="11" fill="#9a9a9a"/></svg>
<svg class="a" style="left:1578px;top:290px;" width="19" height="19" viewBox="0 0 19 19"><circle cx="9.5" cy="9.5" r="8.5" fill="#2f9e3b"/><path d="M9.5 9.5 L1 8 A8.5 8.5 0 0 1 10 1Z" fill="#2a7fd0"/><path d="M9.5 9.5 L10 1 A8.5 8.5 0 0 1 18 9Z" fill="#e6332a"/><path d="M9.5 9.5 L18 9 A8.5 8.5 0 0 1 11 18Z" fill="#f0c419"/></svg>
<svg class="a" style="left:1578px;top:314px;" width="19" height="19" viewBox="0 0 19 19"><rect x="1" y="1" width="17" height="17" rx="1" fill="#fff" stroke="#12405f" stroke-width="1.1"/><rect x="1" y="1" width="17" height="3" fill="#3c86c4"/><path d="M3 7.5 H6 M3 11.5 H6 M3 15.5 H6" stroke="#1e6fa8" stroke-width="2"/><path d="M8 7.5 H16 M8 11.5 H16 M8 15.5 H16" stroke="#222" stroke-width="1"/></svg>
<svg class="a" style="left:230px;top:730px;" width="70" height="70" viewBox="0 0 70 70"><path d="M39 38 L42 22" stroke="#1d5a1d" stroke-width="3.4"/><path d="M38.5 28 L43 18 L47 29 L43 27Z" fill="#2a7a2a" stroke="#0f4a0f" stroke-width="0.6"/><path d="M39 38 L18 44" stroke="#2020d0" stroke-width="3.2"/><path d="M12 46 L22 40 L23 48Z" fill="#3c3cf0" stroke="#1a1aa0" stroke-width="0.6"/><path d="M39 38 L49 54" stroke="#b02020" stroke-width="3.2"/><path d="M53 59 L45 53 L52 49Z" fill="#e04040" stroke="#901010" stroke-width="0.6"/><path d="M40 11 L43 15 L46 11 M43 15 V19" fill="none" stroke="#1a7a1a" stroke-width="0.9"/><path d="M5.5 43 H10 L6 51 H10.5" fill="none" stroke="#2020e0" stroke-width="0.9"/><path d="M51 60 L56 68 M56 60 L51 68" stroke="#ee1111" stroke-width="0.9"/></svg>
<div class="a" style="left:0px;top:116px;width:230px;height:23px;background:#f7f7f7;"></div>
<div class="a" style="left:68px;top:116px;width:1px;height:1px;background:#8c8c8c;"></div>
<div class="a" style="left:68px;top:116px;width:944px;height:23px;background:#d6d6d6;border:1px solid #8e8e8e;"></div>
<div class="t" style="left:76.38px;top:122.00px;font-size:12px;line-height:12px;color:#1a1a1a;transform:scaleX(0.9088);transform-origin:0 0;">Esquisse</div>
<div class="a" style="left:128px;top:117px;width:1px;height:21px;background:#8e8e8e;"></div>
<div class="t" style="left:136.38px;top:122.00px;font-size:12px;line-height:12px;color:#1a1a1a;">Marquage</div>
<div class="a" style="left:198px;top:117px;width:1px;height:21px;background:#8e8e8e;"></div>
<div class="t" style="left:207.50px;top:122.00px;font-size:12px;line-height:12px;color:#1a1a1a;transform:scaleX(0.9339);transform-origin:0 0;">Evaluer</div>
<div class="a" style="left:254px;top:117px;width:1px;height:21px;background:#8e8e8e;"></div>
<div class="t" style="left:262.75px;top:122.00px;font-size:12px;line-height:12px;color:#1a1a1a;transform:scaleX(0.9764);transform-origin:0 0;">Dimensions MBD</div>
<div class="a" style="left:361px;top:117px;width:1px;height:21px;background:#8e8e8e;"></div>
<div class="t" style="left:369.50px;top:122.00px;font-size:12px;line-height:12px;color:#1a1a1a;transform:scaleX(0.9465);transform-origin:0 0;">Compléments de SOLIDWORKS</div>
<div class="a" style="left:543px;top:117px;width:1px;height:21px;background:#8e8e8e;"></div>
<div class="t" style="left:558.88px;top:122.00px;font-size:12px;line-height:12px;color:#1a1a1a;transform:scaleX(0.9469);transform-origin:0 0;">MBD</div>
<div class="a" style="left:599px;top:117px;width:1px;height:21px;background:#8e8e8e;"></div>
<div class="t" style="left:609.12px;top:122.00px;font-size:12px;line-height:12px;color:#1a1a1a;transform:scaleX(0.9138);transform-origin:0 0;">SOLIDWORKS CAM</div>
<div class="a" style="left:720px;top:117px;width:1px;height:21px;background:#8e8e8e;"></div>
<div class="t" style="left:728.62px;top:122.00px;font-size:12px;line-height:12px;color:#1a1a1a;transform:scaleX(0.9210);transform-origin:0 0;">SOLIDWORKS CAM TBM</div>
<div class="a" style="left:865px;top:117px;width:1px;height:21px;background:#8e8e8e;"></div>
<div class="t" style="left:873.75px;top:122.00px;font-size:12px;line-height:12px;color:#1a1a1a;transform:scaleX(0.9291);transform-origin:0 0;">SOLIDWORKS Inspection</div>
<div class="a" style="left:0px;top:138px;width:68px;height:1px;background:#8e8e8e;"></div>
<div class="t" style="left:8.50px;top:122.00px;font-size:12px;line-height:12px;color:#1a1a1a;transform:scaleX(1.0091);transform-origin:0 0;">Fonctions</div>
<div class="a" style="left:0;top:139px;width:229px;height:687px;background:#f7f7f7"></div>
<div class="a" style="left:229px;top:139px;width:1px;height:687px;background:#8a8a8a;"></div>
<div class="a" style="left:0px;top:139px;width:228px;height:4px;background:#fbfbfb;"></div>
<div class="a" style="left:0px;top:143px;width:227px;height:1px;background:#cdcdcd;"></div>
<svg class="a" style="left:110px;top:148px;" width="6" height="6" viewBox="0 0 6 6"><circle cx="3" cy="3" r="2.4" fill="#e0e0e0" stroke="#a6a6a6" stroke-width="0.9"/></svg>
<div class="a" style="left:0px;top:158px;width:227px;height:1px;background:#cdcdcd;"></div>
<div class="a" style="left:2px;top:163px;width:225px;height:1px;background:#7e7e7e;"></div>
<div class="a" style="left:0px;top:188px;width:227px;height:1px;background:#8e8e8e;"></div>
<div class="a" style="left:2px;top:164px;width:40px;height:24px;background:#d6d6d6;border-left:1px solid #8e8e8e;"></div>
<div class="a" style="left:42px;top:164px;width:39px;height:24px;background:#f7f7f7;border-left:1px solid #8e8e8e;"></div>
<div class="a" style="left:81px;top:164px;width:40px;height:24px;background:#d6d6d6;border-left:1px solid #8e8e8e;"></div>
<div class="a" style="left:121px;top:164px;width:41px;height:24px;background:#d6d6d6;border-left:1px solid #8e8e8e;"></div>
<div class="a" style="left:162px;top:164px;width:40px;height:24px;background:#d6d6d6;border-left:1px solid #8e8e8e;"></div>
<div class="a" style="left:42px;top:188px;width:39px;height:1px;background:#f7f7f7;"></div>
<div class="a" style="left:202px;top:164px;width:25px;height:24px;background:#d6d6d6;border-left:1px solid #8e8e8e;"></div>
<svg class="a" style="left:212px;top:166px;" width="15" height="5" viewBox="0 0 15 5"><rect x="0.5" y="0.5" width="14" height="5" fill="#e8e8e8" stroke="#6a8aa8" stroke-width="0.8"/><rect x="1" y="1" width="13" height="2" fill="#4a90c8"/></svg>
<div class="a" style="left:191px;top:170px;width:18px;height:19px;background:#efefef;border:1px solid #d5d5d5;"></div>
<div class="a" style="left:209px;top:170px;width:18px;height:19px;background:#efefef;border:1px solid #d5d5d5;"></div>
<svg class="a" style="left:197px;top:176px;" width="5" height="7" viewBox="0 0 5 7"><path d="M4.5 0 V7 L0 3.5Z" fill="#111"/></svg>
<svg class="a" style="left:217px;top:176px;" width="5" height="7" viewBox="0 0 5 7"><path d="M0 0 V7 L4.5 3.5Z" fill="#111"/></svg>
<svg class="a" style="left:10px;top:162.5px;" width="24" height="24" viewBox="0 0 24 24"><g stroke="#5a3a00" stroke-width="0.9" stroke-linejoin="round"><polygon points="4.2,9.4 6.3,9.1 7.6,6 11.2,7.5 11.5,12.7 15.7,14.5 15.4,21.1 4.5,13.9" fill="#f5c518"/><polygon points="7.6,6 12.1,4.2 16.6,6 11.2,7.5" fill="#f3dc8a"/><polygon points="11.2,7.5 16.6,6 16.6,11.2 11.5,12.7" fill="#f7e25a"/><polygon points="11.5,12.7 16.6,11.2 20.5,12.1 15.7,14.5" fill="#f3dc8a"/><polygon points="15.7,14.5 20.5,12.1 20.8,18.1 15.4,21.1" fill="#f7e25a"/></g></svg>
<svg class="a" style="left:52px;top:167px;" width="19" height="18" viewBox="0 0 19 18"><rect x="1" y="1" width="17" height="16" rx="1.5" fill="#fff" stroke="#1a2a3a" stroke-width="1.2"/><rect x="1.6" y="1.6" width="15.8" height="2.6" fill="#5fa6d8"/><rect x="3" y="6" width="3.5" height="2" fill="#2a78b8" stroke="#1a3a5a" stroke-width="0.5"/><rect x="3" y="9.5" width="3.5" height="2" fill="#2a78b8" stroke="#1a3a5a" stroke-width="0.5"/><rect x="3" y="13" width="3.5" height="2" fill="#2a78b8" stroke="#1a3a5a" stroke-width="0.5"/><path d="M8 7 H16 M8 10.5 H16 M8 14 H16" stroke="#222" stroke-width="1.1"/></svg>
<svg class="a" style="left:94px;top:166px;" width="16" height="20" viewBox="0 0 16 20"><path d="M1.5 1 V18.8 M1.5 1.2 H6 M1.5 12.5 H8 M1.5 18.3 H8" fill="none" stroke="#111" stroke-width="1.5"/><rect x="6" y="0.6" width="6" height="5.4" fill="#fff" stroke="#111" stroke-width="1.1"/><rect x="7.6" y="3.2" width="5.6" height="5.6" fill="#fff" stroke="#111" stroke-width="1.1"/><rect x="8" y="11.5" width="6" height="7" fill="#fff" stroke="#111" stroke-width="1.1"/></svg>
<svg class="a" style="left:133px;top:167px;" width="18" height="18" viewBox="0 0 18 18"><circle cx="9" cy="9" r="6" fill="none" stroke="#111" stroke-width="1.8"/><path d="M9 0 V18 M0 9 H18" stroke="#111" stroke-width="1.8"/></svg>
<svg class="a" style="left:173px;top:166px;" width="19" height="19" viewBox="0 0 19 19"><circle cx="9.5" cy="9.5" r="8.8" fill="#e8c020"/><path d="M9.5 9.5 L0.7 9.5 A8.8 8.8 0 0 1 9.5 0.7Z" fill="#3a86d8"/><path d="M9.5 9.5 L9.5 0.7 A8.8 8.8 0 0 1 18.3 9.5Z" fill="#d93a2a"/><path d="M9.5 9.5 L0.7 9.5 A8.8 8.8 0 0 0 9.5 18.3Z" fill="#3aa84a"/><ellipse cx="13.5" cy="5.5" rx="2.6" ry="4.5" transform="rotate(-35 13.5 5.5)" fill="#111"/><circle cx="9.5" cy="9.5" r="8.8" fill="none" stroke="#555" stroke-width="0.5"/></svg>
<svg class="a" style="left:9px;top:195px;" width="21" height="20" viewBox="0 0 21 20"><g stroke-linejoin="round"><polygon points="7,1.5 12.5,0.5 19.5,3 19.5,17.5 14,18.8 7.5,15.5" fill="#fff" stroke="#333" stroke-width="0.9"/><path d="M7 1.5 L14 4 L19.5 3 M14 4 V18.8" fill="none" stroke="#333" stroke-width="0.8"/><polygon points="1,6.5 6.5,4.5 12.5,6.5 7,9" fill="#9fd0ee" stroke="#1d4f73" stroke-width="0.9"/><polygon points="1,6.5 7,9 7,16.5 1,14" fill="#5aa6d6" stroke="#1d4f73" stroke-width="0.9"/><polygon points="7,9 12.5,6.5 12.5,14 7,16.5" fill="#3f8cc0" stroke="#1d4f73" stroke-width="0.9"/></g></svg>
<div class="t" style="left:34.50px;top:200.40px;font-size:12px;line-height:12px;color:#151515;font-weight:bold;-webkit-text-stroke:0;transform:scaleX(0.9295);transform-origin:0 0;">Boss.-Extru.</div>
<svg class="a" style="left:200px;top:197px;" width="16" height="16" viewBox="0 0 16 16"><circle cx="8" cy="8" r="6.8" fill="#fff" stroke="#333" stroke-width="1"/><path d="M5.5 6 C5.5 3.5 10.5 3.5 10.5 6 C10.5 8 8 8 8 10" fill="none" stroke="#1f5f9f" stroke-width="1.5"/><circle cx="8" cy="12" r="0.9" fill="#1f5f9f"/></svg>
<svg class="a" style="left:8px;top:226px;" width="15" height="12" viewBox="0 0 15 12"><path d="M1 6 L5.5 10.5 L14 1.5" fill="none" stroke="#3a9a2a" stroke-width="2.4"/></svg>
<svg class="a" style="left:36px;top:227px;" width="13" height="12" viewBox="0 0 13 12"><path d="M1 1 L12 11 M12 1 L1 11" stroke="#e02020" stroke-width="2"/></svg>
<svg class="a" style="left:60px;top:225px;" width="19" height="14" viewBox="0 0 19 14"><path d="M1 7 C5 1 14 1 18 7 C14 13 5 13 1 7Z" fill="#fff" stroke="#444" stroke-width="1"/><circle cx="9.5" cy="6.5" r="3.8" fill="#111"/><circle cx="8.3" cy="5.2" r="1" fill="#fff"/></svg>
<div class="a" style="left:5px;top:253px;width:217px;height:1px;background:#c8c8c8;"></div>
<div class="t" style="left:9.20px;top:262.00px;font-size:12px;line-height:12px;color:#3a3a3a;font-weight:bold;-webkit-text-stroke:0;transform:scaleX(0.9257);transform-origin:0 0;">De</div>
<svg class="a" style="left:209px;top:264px;" width="10" height="7" viewBox="0 0 10 7"><path d="M0.8 6 L5 1.5 L9.2 6" fill="none" stroke="#555" stroke-width="1.5"/></svg>
<div class="a" style="left:9px;top:281px;width:24px;height:24px;background:#a8a8a8;border:1px solid #5a5a5a;"></div>
<svg class="a" style="left:12px;top:284px;" width="18" height="18" viewBox="0 0 18 18"><path d="M2.5 10.5 L10 3" stroke="#111" stroke-width="2"/><path d="M5 2 H11.5 V8.5Z" fill="#111"/><path d="M15 7 L7.5 14.5" stroke="#dcdcdc" stroke-width="1.8"/><path d="M6 9 V16 H13" fill="none" stroke="#dcdcdc" stroke-width="1.8"/></svg>
<div class="a" style="left:39px;top:283px;width:175px;height:21px;background:#e1e1e1;border:1px solid #adadad;"></div>
<div class="t" style="left:43.50px;top:288.00px;font-size:12px;line-height:12px;color:#111;transform:scaleX(0.9073);transform-origin:0 0;">Décalage</div>
<svg class="a" style="left:200px;top:291px;" width="10" height="6" viewBox="0 0 10 6"><path d="M0.5 0.5 L5 5 L9.5 0.5" fill="none" stroke="#555" stroke-width="1.1"/></svg>
<div class="a" style="left:39px;top:313px;width:175px;height:21px;background:#fff;border:1px solid #a4a4a4;"></div>
<div class="t" style="left:41.50px;top:317.00px;font-size:12px;line-height:12px;color:#111;transform:scaleX(0.8896);transform-origin:0 0;">15.00mm</div>
<div class="a" style="left:196px;top:315px;width:16px;height:17px;background:#f0f0f0;border:1px solid #b8b8b8;"></div>
<div class="a" style="left:197px;top:323px;width:14px;height:1px;background:#c8c8c8;"></div>
<svg class="a" style="left:200px;top:317px;" width="8" height="4" viewBox="0 0 8 4"><path d="M0 4 H8 L4 0Z" fill="#111"/></svg>
<svg class="a" style="left:200px;top:326px;" width="8" height="4" viewBox="0 0 8 4"><path d="M0 0 H8 L4 4Z" fill="#111"/></svg>
<div class="a" style="left:5px;top:344px;width:217px;height:1px;background:#c8c8c8;"></div>
<div class="t" style="left:9.20px;top:352.70px;font-size:12px;line-height:12px;color:#3a3a3a;font-weight:bold;-webkit-text-stroke:0;transform:scaleX(0.8949);transform-origin:0 0;">Direction 1</div>
<svg class="a" style="left:209px;top:355px;" width="10" height="7" viewBox="0 0 10 7"><path d="M0.8 6 L5 1.5 L9.2 6" fill="none" stroke="#555" stroke-width="1.5"/></svg>
<div class="a" style="left:9px;top:372px;width:24px;height:24px;background:#a8a8a8;border:1px solid #5a5a5a;"></div>
<svg class="a" style="left:12px;top:375px;" width="18" height="18" viewBox="0 0 18 18"><path d="M2.5 10.5 L10 3" stroke="#111" stroke-width="2"/><path d="M5 2 H11.5 V8.5Z" fill="#111"/><path d="M15 7 L7.5 14.5" stroke="#dcdcdc" stroke-width="1.8"/><path d="M6 9 V16 H13" fill="none" stroke="#dcdcdc" stroke-width="1.8"/></svg>
<div class="a" style="left:39px;top:374px;width:175px;height:21px;background:#e1e1e1;border:1px solid #adadad;"></div>
<div class="t" style="left:43.50px;top:379.00px;font-size:12px;line-height:12px;color:#111;transform:scaleX(0.9445);transform-origin:0 0;">Jusqu&#x27;à la surface</div>
<svg class="a" style="left:200px;top:382px;" width="10" height="6" viewBox="0 0 10 6"><path d="M0.5 0.5 L5 5 L9.5 0.5" fill="none" stroke="#555" stroke-width="1.1"/></svg>
<svg class="a" style="left:14px;top:405px;" width="14" height="13" viewBox="0 0 14 13"><path d="M1.5 11.5 L11 2" stroke="#2a6c99" stroke-width="2"/><path d="M5 1.5 H12 V8.5Z" fill="#2a6c99"/></svg>
<div class="a" style="left:39px;top:399px;width:13px;height:36px;background:#55aaff;"></div>
<div class="a" style="left:52px;top:399px;width:162px;height:36px;background:#fff;border:1px solid #7a89a6;"></div>
<svg class="a" style="left:11px;top:444px;" width="20" height="20" viewBox="0 0 20 20"><defs><linearGradient id="fg" x1="0" y1="0" x2="1" y2="1"><stop offset="0" stop-color="#8cc4e6"/><stop offset="1" stop-color="#3a86b8"/></linearGradient></defs><path d="M1 11 C4 6 8 9 11 5 C12.5 3 13 1.5 14 1 L19 5 C18 8 16 11 12 12 C9 13 8 15 7 18.5Z" fill="url(#fg)" stroke="#1d4f73" stroke-width="0.9" stroke-linejoin="round"/></svg>
<div class="a" style="left:39px;top:442px;width:13px;height:22px;background:#f67fc0;"></div>
<div class="a" style="left:52px;top:442px;width:162px;height:22px;background:#0a74d6;border:2px solid #8cc8ff;"></div>
<div class="t" style="left:56.80px;top:446.50px;font-size:11px;line-height:11px;color:#fff;transform:scaleX(0.9788);transform-origin:0 0;">Face&lt;1&gt;</div>
<div class="a" style="left:39px;top:475px;width:13px;height:13px;background:#fff;border:1px solid #333;"></div>
<svg class="a" style="left:39px;top:475px;" width="13" height="13" viewBox="0 0 13 13"><path d="M2.5 6.5 L5.5 9.5 L11 3" fill="none" stroke="#222" stroke-width="1.3"/></svg>
<div class="t" style="left:55.50px;top:476.00px;font-size:12px;line-height:12px;color:#111;transform:scaleX(0.9658);transform-origin:0 0;">Fusionner le résultat</div>
<div class="a" style="left:9px;top:498px;width:24px;height:24px;background:#f0f0f0;border:1px solid #a8a8a8;"></div>
<svg class="a" style="left:11px;top:501px;" width="20" height="18" viewBox="0 0 20 18"><path d="M1 5 L8 1 L17 4 L19 10 V16 L12 17 L1 12Z" fill="#5aa6d6" stroke="#1d4f73" stroke-width="0.9"/><path d="M12 10 L19 9 V16 L12 17Z" fill="#fff" stroke="#1d4f73" stroke-width="0.8"/></svg>
<div class="a" style="left:39px;top:500px;width:175px;height:21px;background:#efefef;border:1px solid #c6c6c6;"></div>
<div class="a" style="left:196px;top:502px;width:16px;height:17px;background:#f0f0f0;border:1px solid #b8b8b8;"></div>
<div class="a" style="left:197px;top:510px;width:14px;height:1px;background:#c8c8c8;"></div>
<svg class="a" style="left:200px;top:504px;" width="8" height="4" viewBox="0 0 8 4"><path d="M0 4 H8 L4 0Z" fill="#111"/></svg>
<svg class="a" style="left:200px;top:513px;" width="8" height="4" viewBox="0 0 8 4"><path d="M0 0 H8 L4 4Z" fill="#111"/></svg>
<div class="a" style="left:39px;top:531px;width:13px;height:13px;background:#fff;border:1px solid #cfcfcf;"></div>
<div class="t" style="left:55.50px;top:530.60px;font-size:12px;line-height:12px;color:#8c8c8c;transform:scaleX(0.9703);transform-origin:0 0;">Dépouiller vers l&#x27;extérieur</div>
<div class="a" style="left:5px;top:555px;width:217px;height:1px;background:#c8c8c8;"></div>
<div class="a" style="left:9px;top:563px;width:13px;height:13px;background:#fff;border:1px solid #333;"></div>
<div class="t" style="left:29.50px;top:563.70px;font-size:12px;line-height:12px;color:#3a3a3a;font-weight:bold;-webkit-text-stroke:0;transform:scaleX(0.8869);transform-origin:0 0;">Direction 2</div>
<svg class="a" style="left:209px;top:566px;" width="10" height="7" viewBox="0 0 10 7"><path d="M0.8 1 L5 5.5 L9.2 1" fill="none" stroke="#555" stroke-width="1.5"/></svg>
<div class="a" style="left:5px;top:587px;width:217px;height:1px;background:#c8c8c8;"></div>
<div class="a" style="left:9px;top:595px;width:13px;height:13px;background:#fff;border:1px solid #333;"></div>
<div class="t" style="left:29.50px;top:595.80px;font-size:12px;line-height:12px;color:#3a3a3a;font-weight:bold;-webkit-text-stroke:0;transform:scaleX(0.9022);transform-origin:0 0;">Fonction mince</div>
<svg class="a" style="left:209px;top:598px;" width="10" height="7" viewBox="0 0 10 7"><path d="M0.8 1 L5 5.5 L9.2 1" fill="none" stroke="#555" stroke-width="1.5"/></svg>
<div class="a" style="left:5px;top:619px;width:217px;height:1px;background:#c8c8c8;"></div>
<div class="t" style="left:9.30px;top:628.00px;font-size:12px;line-height:12px;color:#3a3a3a;font-weight:bold;-webkit-text-stroke:0;transform:scaleX(0.8859);transform-origin:0 0;">Contours sélectionnés</div>
<svg class="a" style="left:209px;top:630px;" width="10" height="7" viewBox="0 0 10 7"><path d="M0.8 6 L5 1.5 L9.2 6" fill="none" stroke="#555" stroke-width="1.5"/></svg>
<svg class="a" style="left:11px;top:649px;" width="20" height="20" viewBox="0 0 20 20"><path d="M10 2 L18 10 L10 18 L2 10Z" fill="none" stroke="#2a6c99" stroke-width="2" stroke-linejoin="round"/></svg>
<div class="a" style="left:39px;top:647px;width:175px;height:49px;background:#fff;border:1px solid #7a89a6;"></div>
<div class="t" style="left:42.20px;top:651.70px;font-size:11px;line-height:11px;color:#111;transform:scaleX(1.0255);transform-origin:0 0;">Esquisse1-Région&lt;1&gt;</div>
<div class="t" style="left:42.20px;top:667.50px;font-size:11px;line-height:11px;color:#111;transform:scaleX(1.0255);transform-origin:0 0;">Esquisse1-Région&lt;2&gt;</div>
<svg class="a" style="left:123px;top:697px;" width="6" height="6" viewBox="0 0 6 6"><circle cx="3" cy="3" r="2.4" fill="#e0e0e0" stroke="#a6a6a6" stroke-width="0.9"/></svg>
<div class="a" style="left:0px;top:823px;width:227px;height:1px;background:#d2d2d2;"></div>
<div class="a" style="left:0px;top:826px;width:1600px;height:1px;background:#8a8a8a;"></div>
<div class="a" style="left:0px;top:827px;width:1600px;height:1px;background:#f4f4f4;"></div>
<div class="a" style="left:2px;top:826px;width:64px;height:2px;background:#2a2a2a;"></div>
<div class="a" style="left:130px;top:826px;width:62px;height:2px;background:#d8d8d8;"></div>
<div class="a" style="left:229px;top:452px;width:9px;height:38px;background:#f7f7f7;border:1px solid #8a8a8a;border-left:none;"></div>
<svg class="a" style="left:230px;top:468px;" width="6" height="6" viewBox="0 0 6 6"><circle cx="3" cy="3" r="2.4" fill="#e0e0e0" stroke="#a6a6a6" stroke-width="0.9"/></svg>
<svg class="a" style="left:0;top:0" width="1600" height="828" viewBox="0 0 1600 828">
<polygon points="711.6,436 812,404 854,388 997.4,639 781.4,706 699.6,564 742.3,551.3" fill="#9da1b3"/>
<polygon points="693.5,371.4 823,331 866,318 854,388 812,404 711.6,436" fill="#7b7f8f"/>
<polygon points="629.5,349.7 845.7,282 866,318 650.3,384.7" fill="#9a9eb0"/>
<polygon points="650.3,384.7 693.5,371.4 711.6,436 742.3,551.3 699.6,564" fill="#a3a7b8"/>
<polygon points="629.5,349.7 613,453 587.8,448 792.3,800.3 776.8,735.6 781.4,706 699.6,564 650.3,384.7" fill="#4f525e"/>
<polygon points="587.8,448 613.8,439.2 613,453" fill="#8d91a3"/>
<polygon points="781.4,706 997.4,639 992.3,668.7 776.8,735.6" fill="#7a7e8e"/>
<polygon points="776.8,735.6 992.3,668.7 1008.7,733.4 792.3,800.3" fill="#a0a4b6"/>
<polyline points="845.7,282 629.5,349.7 613,453 613.8,439.2 587.8,448 792.3,800.3 776.8,735.6 781.4,706 699.6,564 650.3,384.7 629.5,349.7" fill="none" stroke="#141414" stroke-width="1.25" stroke-linejoin="round" />
<polyline points="650.3,384.7 823,331" fill="none" stroke="#141414" stroke-width="1.25" stroke-linejoin="round" />
<polyline points="587.8,448 613,453" fill="none" stroke="#141414" stroke-width="1.25" stroke-linejoin="round" />
<polyline points="693.5,371.4 711.6,436 742.3,551.3 699.6,564" fill="none" stroke="#141414" stroke-width="1.25" stroke-linejoin="round" />
<polyline points="711.6,436 812,404" fill="none" stroke="#141414" stroke-width="1.25" stroke-linejoin="round" />
<polyline points="781.4,706 997.4,639" fill="none" stroke="#141414" stroke-width="1.25" stroke-linejoin="round" />
<polyline points="776.8,735.6 992.3,668.7" fill="none" stroke="#141414" stroke-width="1.25" stroke-linejoin="round" />
<polyline points="792.3,800.3 1008.7,733.4" fill="none" stroke="#141414" stroke-width="1.25" stroke-linejoin="round" />
<polyline points="845.7,282 866,318" fill="none" stroke="#f27ab5" stroke-width="1.5" stroke-linejoin="round" />
<polyline points="866,318 854,388" fill="none" stroke="#f27ab5" stroke-width="1.0" stroke-linejoin="round" />
<polyline points="854,388 997.4,639 992.3,668.7 1008.7,733.4" fill="none" stroke="#f27ab5" stroke-width="1.6" stroke-linejoin="round" />
<polyline points="845.7,282 830,386 804.7,380.6 1008.7,733.4" fill="none" stroke="#f27ab5" stroke-width="1.0" stroke-linejoin="round" />
<polygon points="758.8,351.2 746.6,425.6 807,531 819.7,457" fill="#7a4a8c"/>
<polygon points="758.8,351.2 746.6,425.6 818.6,405.3 819.7,457" fill="#6a3a7a" clip-path="url(#cp)"/>
<line x1="746.6" y1="425.6" x2="794" y2="412.3" stroke="#3a1a4a" stroke-width="0.9"/>
<defs><clipPath id="cp"><polygon points="758.8,351.2 746.6,425.6 807,531 819.7,457"/></clipPath></defs>
<polyline points="738,315 758.8,351.2 746.6,425.6 807,531 819.7,457 758.8,351.2 807,531" fill="none" stroke="#4fa3f7" stroke-width="1.9" stroke-linejoin="round" />
<polyline points="807,531 838.9,585.4 869.6,637.8 889.5,673 884.6,702 900.3,767.8" fill="none" stroke="#4fa3f7" stroke-width="1.9" stroke-linejoin="round" />
<polyline points="838.9,585.4 840.4,569.3 871.9,622.5 869.6,637.8" fill="none" stroke="#4fa3f7" stroke-width="1.8" stroke-linejoin="round" />
<polyline points="738,315 725.6,390 721.6,419.5" fill="none" stroke="#4fa3f7" stroke-width="1.5" stroke-linejoin="round" stroke-dasharray="4 3"/>
<polyline points="696.9,414.8 721.6,419.5" fill="none" stroke="#4fa3f7" stroke-width="1.5" stroke-linejoin="round" stroke-dasharray="4 3"/>
<polyline points="725.6,390 746.6,425.6" fill="none" stroke="#4fa3f7" stroke-width="1.0" stroke-linejoin="round" stroke-dasharray="3 3"/>
<polyline points="696.9,414.8 900.3,767.8" fill="none" stroke="#4fa3f7" stroke-width="1.6" stroke-linejoin="round" stroke-dasharray="4 3.5"/>
<polyline points="850.9,506.7 816.4,723.6" fill="none" stroke="#4fa3f7" stroke-width="1.0" stroke-linejoin="round" stroke-dasharray="10 2 2 2"/>
<circle cx="738" cy="315" r="2.7" fill="#4fa3f7"/>
<circle cx="758.8" cy="351.2" r="2.7" fill="#4fa3f7"/>
<circle cx="746.6" cy="425.6" r="2.7" fill="#4fa3f7"/>
<circle cx="819.7" cy="457" r="2.7" fill="#4fa3f7"/>
<circle cx="807" cy="531" r="2.7" fill="#4fa3f7"/>
<circle cx="838.9" cy="585.4" r="2.7" fill="#4fa3f7"/>
<circle cx="869.6" cy="637.8" r="2.7" fill="#4fa3f7"/>
<circle cx="889.5" cy="673" r="2.7" fill="#4fa3f7"/>
<circle cx="884.6" cy="702" r="2.7" fill="#4fa3f7"/>
<circle cx="900.3" cy="767.8" r="2.7" fill="#4fa3f7"/>
<circle cx="840.4" cy="569.3" r="2.7" fill="#4fa3f7"/>
<circle cx="871.9" cy="622.5" r="2.7" fill="#4fa3f7"/>
<circle cx="725.6" cy="390" r="2.7" fill="#4fa3f7"/>
<circle cx="721.6" cy="419.5" r="2.7" fill="#4fa3f7"/>
<circle cx="696.9" cy="414.8" r="2.7" fill="#4fa3f7"/>
<circle cx="850.9" cy="506.7" r="2.7" fill="#4fa3f7"/>
<circle cx="816.4" cy="723.6" r="2.7" fill="#4fa3f7"/>
<polygon points="823,331 884.4,436.3 872.9,511 812,404" fill="#6f7058" fill-opacity="0.9"/>
<polygon points="823,331 866,318 854,388" fill="#a6a67e"/>
<polygon points="866,318 928,423 884.4,436.3 854,388" fill="#cbcb97"/>
<polygon points="884.4,436.3 928,423 916.3,497.6 872.9,511" fill="#a9a97b"/>
<polygon points="812,404 854,388 884.4,436.3 872.9,511" fill="#77775e"/>
<polyline points="823,331 866,318 928,423 884.4,436.3 823,331" fill="none" stroke="#ffff00" stroke-width="1.4" stroke-linejoin="round" />
<polyline points="884.4,436.3 872.9,511 916.3,497.6 928,423" fill="none" stroke="#ffff00" stroke-width="1.4" stroke-linejoin="round" />
<polyline points="823,331 812,404 872.9,511" fill="none" stroke="#ffff00" stroke-width="1.4" stroke-linejoin="round" />
<polyline points="812,404 854,388" fill="none" stroke="#b8b040" stroke-width="0.8" stroke-linejoin="round" />
<polyline points="845.7,282 866,318" fill="none" stroke="#f27ab5" stroke-width="1.2" stroke-linejoin="round" />
<polyline points="866,318 854,388" fill="none" stroke="#f27ab5" stroke-width="1.0" stroke-linejoin="round" />
<polyline points="854,388 916.3,497.6" fill="none" stroke="#f7a07a" stroke-width="1.0" stroke-linejoin="round" />
<polyline points="845.7,282 830,386 804.7,380.6 880,510" fill="none" stroke="#f27ab5" stroke-width="1.0" stroke-linejoin="round" />
<path d="M846 382 V390 M842 386 H850" stroke="#f27ab5" stroke-width="1"/>
<polygon points="797,435 1000,372.3 1000.8,375.5 797.6,439.6" fill="#8e8e8e"/>
<line x1="797" y1="435.8" x2="1000" y2="373" stroke="#c4c4c4" stroke-width="1"/>
<path d="M1012 370.5 L1000 365.5 L1000 378 Z" fill="#8a8a8a"/>
<path d="M999 365 L1001.5 366 L1002 378.5 L999.5 377.5Z" fill="#444"/>
<path d="M774 443.5 L790 433 L792 446 Z" fill="#909090" stroke="#6a6a6a" stroke-width="0.5"/>
<path d="M781 443 L796 431 L799 445 Z" fill="#a0a0a0" stroke="#6a6a6a" stroke-width="0.5"/>
<path d="M786 442 L797 433 L800 444 Z" fill="#b0b0b0" stroke="#6a6a6a" stroke-width="0.5"/>
</svg>
</body></html>
